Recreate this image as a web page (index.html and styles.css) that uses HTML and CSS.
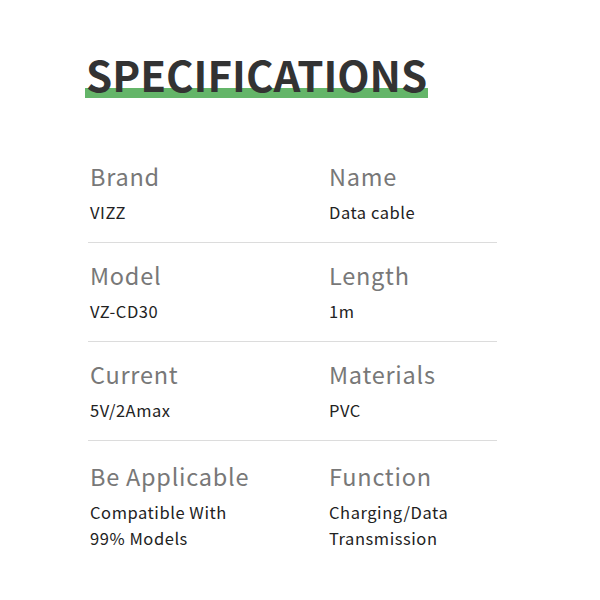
FILE: index.html
```html
<!DOCTYPE html>
<html lang="en">
<head>
<meta charset="utf-8">
<title>Specifications</title>
<link rel="stylesheet" href="styles.css">
</head>
<body>
<main class="sheet">
  <h1 class="title"><span class="title-text">SPECIFICATIONS</span></h1>
  <section class="specs">
    <div class="row">
      <div class="cell">
        <div class="label">Brand</div>
        <div class="value">VIZZ</div>
      </div>
      <div class="cell">
        <div class="label">Name</div>
        <div class="value">Data cable</div>
      </div>
    </div>
    <div class="row">
      <div class="cell">
        <div class="label">Model</div>
        <div class="value">VZ-CD30</div>
      </div>
      <div class="cell">
        <div class="label">Length</div>
        <div class="value">1m</div>
      </div>
    </div>
    <div class="row">
      <div class="cell">
        <div class="label">Current</div>
        <div class="value">5V/2Amax</div>
      </div>
      <div class="cell">
        <div class="label">Materials</div>
        <div class="value">PVC</div>
      </div>
    </div>
    <div class="row row-last">
      <div class="cell">
        <div class="label">Be Applicable</div>
        <div class="value">Compatible With<br>99% Models</div>
      </div>
      <div class="cell">
        <div class="label">Function</div>
        <div class="value">Charging/Data<br>Transmission</div>
      </div>
    </div>
  </section>
</main>
</body>
</html>
```

FILE: styles.css
```css
html, body {
  margin: 0;
  padding: 0;
  background: #ffffff;
}

body {
  font-family: "Noto Sans CJK SC", "Noto Sans", sans-serif;
  width: 600px;
  height: 600px;
  overflow: hidden;
}

.sheet {
  padding: 50px 0 0 85px;
}

.title {
  margin: 0;
  font-size: 42px;
  line-height: 48px;
  font-weight: 700;
  color: #333333;
}

.title-text {
  display: inline-block;
  padding: 0 1px;
  background: linear-gradient(#64b569, #64b569) left bottom / 100% 10px no-repeat;
}

.specs {
  margin: 46px 0 0 3px;
  width: 409px;
}

.row {
  display: grid;
  grid-template-columns: 239px 1fr;
  padding: 17px 0 17px;
  border-bottom: 1px solid #dcdcdc;
}

.row-last {
  padding-top: 20px;
  border-bottom: none;
}

.cell {
  display: flex;
  flex-direction: column;
  gap: 8px;
  padding-left: 2px;
}

.label {
  font-size: 23.5px;
  line-height: 30px;
  letter-spacing: 0.75px;
  color: #787878;
}

.value {
  font-size: 16.5px;
  line-height: 26px;
  letter-spacing: 0.55px;
  color: #222222;
}
```
